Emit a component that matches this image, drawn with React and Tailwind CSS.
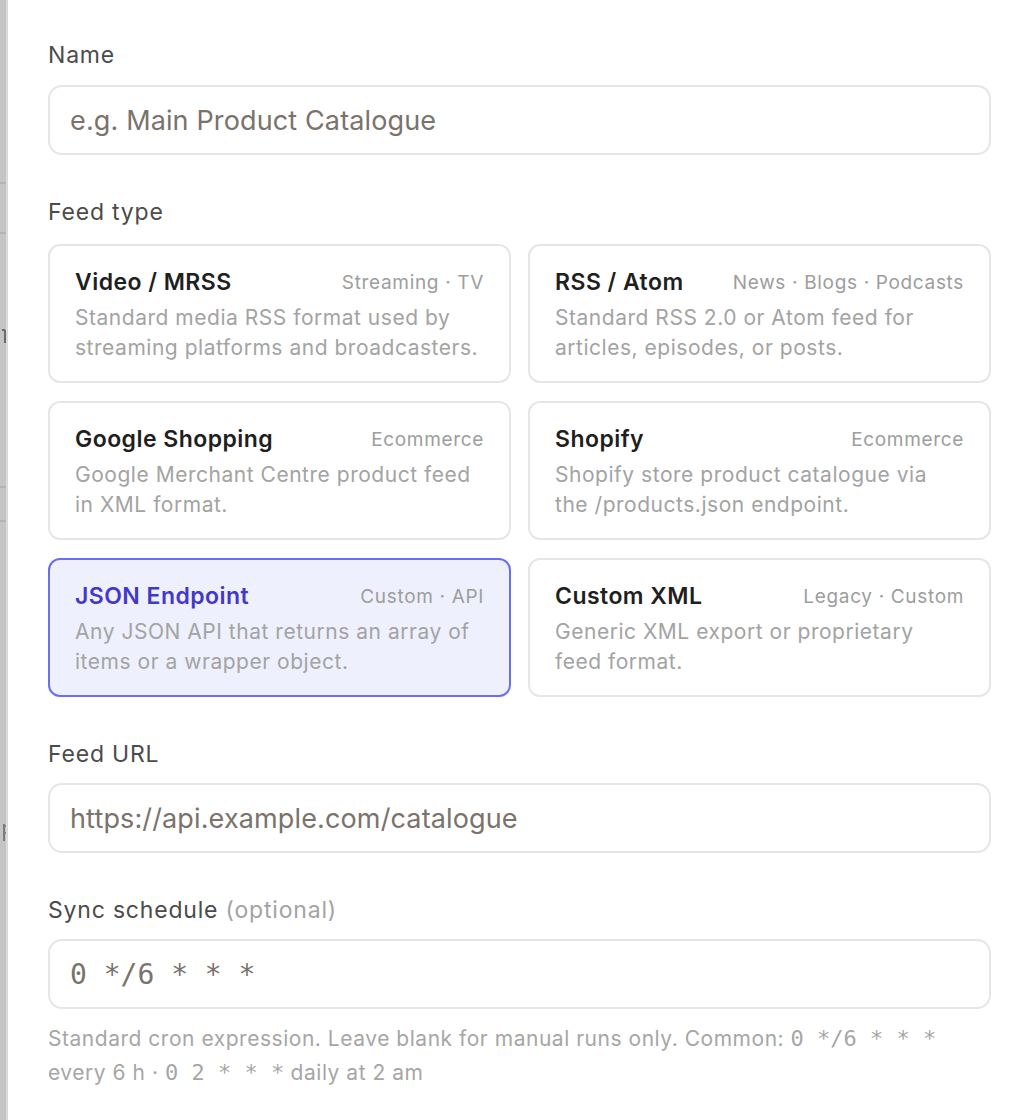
import { useState } from 'react';

const FEED_TYPES = [
    {
        id: 'mrss',
        title: 'Video / MRSS',
        tags: 'Streaming · TV',
        description: 'Standard media RSS format used by streaming platforms and broadcasters.',
    },
    {
        id: 'rss',
        title: 'RSS / Atom',
        tags: 'News · Blogs · Podcasts',
        description: 'Standard RSS 2.0 or Atom feed for articles, episodes, or posts.',
    },
    {
        id: 'google',
        title: 'Google Shopping',
        tags: 'Ecommerce',
        description: 'Google Merchant Centre product feed in XML format.',
    },
    {
        id: 'shopify',
        title: 'Shopify',
        tags: 'Ecommerce',
        description: 'Shopify store product catalogue via the /products.json endpoint.',
    },
    {
        id: 'json',
        title: 'JSON Endpoint',
        tags: 'Custom · API',
        description: 'Any JSON API that returns an array of items or a wrapper object.',
    },
    {
        id: 'xml',
        title: 'Custom XML',
        tags: 'Legacy · Custom',
        description: 'Generic XML export or proprietary feed format.',
    },
];

const sans = 'font-["Inter","Noto_Sans",sans-serif]';
const mono = 'font-["DejaVu_Sans_Mono","Liberation_Mono",monospace]';

const Label = ({ children }) => (
    <label className="block h-[30px] leading-[30px] text-[23px] tracking-[0.035em] text-[#4b4b4b]">
        {children}
    </label>
);

const TextInput = ({ placeholder, value, onChange, monoText }) => (
    <input
        type="text"
        value={value}
        onChange={(e) => onChange(e.target.value)}
        placeholder={placeholder}
        className={`block w-full h-[70px] px-[20px] rounded-[14px] border-2 border-[#e6e6e6] bg-white outline-none text-[#333] placeholder:text-[#7a726b] ${
            monoText ? `${mono} text-[28px]` : 'text-[27px] tracking-[0.005em]'
        }`}
    />
);

const FeedCard = ({ type, selected, onSelect }) => (
    <button
        type="button"
        onClick={() => onSelect(type.id)}
        className={`text-left rounded-[12px] border-2 px-[25px] pt-[21px] pb-[18px] ${
            selected ? 'border-[#6a6ef3] bg-[#eef1fd]' : 'border-[#e6e6e6] bg-white'
        }`}
    >
        <div className="flex items-center justify-between h-[30px]">
            <span
                className={`text-[23px] tracking-[0.02em] font-semibold ${
                    selected ? 'text-[#4338ca]' : 'text-[#1f1f1f]'
                }`}
            >
                {type.title}
            </span>
            <span className="mt-[2px] text-[19px] tracking-[0.035em] text-[#9d9d9d]">{type.tags}</span>
        </div>
        <p className="mt-[6px] text-[21px] tracking-[0.025em] leading-[30px] text-[#a3a3a3]">
            {type.description}
        </p>
    </button>
);

// sliver of the page behind the drawer: row dividers and the edges of two glyphs
const Backdrop = () => (
    <div className="w-[8px] shrink-0 flex bg-[#c4c4c4]">
        <div className="w-[6px] flex flex-col">
            <div className="h-[182px]" />
            <div className="h-[2px] bg-[#b4b4b4]" />
            <div className="h-[48px]" />
            <div className="h-[2px] bg-[#b4b4b4]" />
            <div className="h-[95px]" />
            <div className="h-[14px] flex">
                <div className="w-[2px]" />
                <div className="w-[4px] flex flex-col">
                    <div className="h-[2px] bg-[#6a6a6a] rounded-tr-[2px]" />
                    <div className="w-[2px] ml-[2px] flex-1 bg-[#6a6a6a]" />
                </div>
            </div>
            <div className="h-[143px]" />
            <div className="h-[2px] bg-[#b4b4b4]" />
            <div className="h-[32px]" />
            <div className="h-[2px] bg-[#b4b4b4]" />
            <div className="h-[302px]" />
            <div className="h-[17px] flex">
                <div className="w-[3px]" />
                <div className="w-[3px] flex">
                    <div className="w-[2px] bg-[#7a7a7a]" />
                    <div className="w-[1px] flex flex-col">
                        <div className="h-[2px] mt-[1px] bg-[#8a8a8a]" />
                        <div className="flex-1" />
                        <div className="h-[2px] mb-[7px] bg-[#8a8a8a]" />
                    </div>
                </div>
            </div>
        </div>
        <div className="w-[2px] bg-[#dadada]" />
    </div>
);

export default function App() {
    const [name, setName] = useState('');
    const [feedType, setFeedType] = useState('json');
    const [url, setUrl] = useState('');
    const [schedule, setSchedule] = useState('');

    return (
        <div className={`flex min-h-[1120px] bg-white ${sans}`}>
            <Backdrop />
            <div className="flex-1 pl-[40px] pr-[41px] pt-[40px]">
                <Label>Name</Label>
                <div className="mt-[15px]">
                    <TextInput placeholder="e.g. Main Product Catalogue" value={name} onChange={setName} />
                </div>

                <div className="mt-[42px]">
                    <Label>Feed type</Label>
                </div>
                <div className="mt-[17px] grid grid-cols-2 gap-x-[17px] gap-y-[18px]">
                    {FEED_TYPES.map((type) => (
                        <FeedCard
                            key={type.id}
                            type={type}
                            selected={feedType === type.id}
                            onSelect={setFeedType}
                        />
                    ))}
                </div>

                <div className="mt-[42px]">
                    <Label>Feed URL</Label>
                </div>
                <div className="mt-[14px]">
                    <TextInput placeholder="https://api.example.com/catalogue" value={url} onChange={setUrl} />
                </div>

                <div className="mt-[42px]">
                    <Label>
                        Sync schedule <span className="text-[#a3a3a3]">(optional)</span>
                    </Label>
                </div>
                <div className="mt-[14px]">
                    <TextInput placeholder="0 */6 * * *" value={schedule} onChange={setSchedule} monoText />
                </div>
                <p className="mt-[13px] text-[21px] tracking-[0.025em] leading-[34px] text-[#a6a6a6]">
                    Standard cron expression. Leave blank for manual runs only. Common:{' '}
                    <span className={`${mono} text-[22px] tracking-normal`}>0 */6 * * *</span> every 6 h ·{' '}
                    <span className={`${mono} text-[22px] tracking-normal`}>0 2 * * *</span> daily at 2 am
                </p>
            </div>
        </div>
    );
}
